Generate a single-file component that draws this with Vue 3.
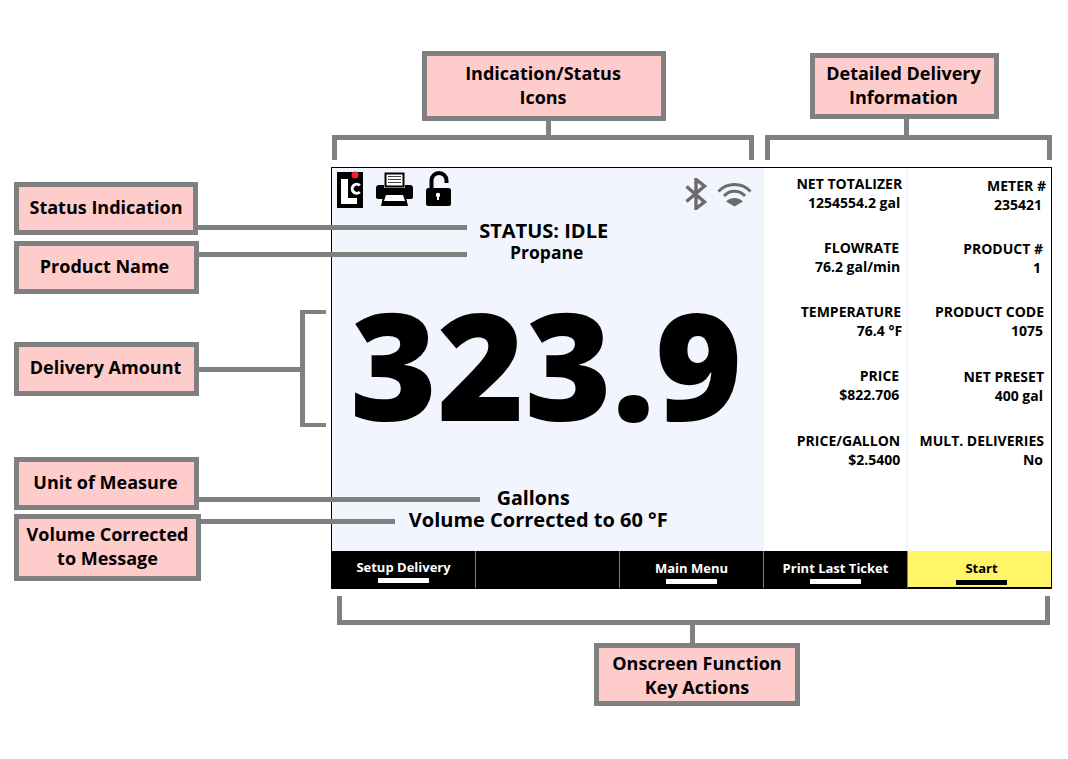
<script setup>
const callouts = [
  { text: ['Indication/Status', 'Icons'], x: 422, y: 51, w: 244, h: 70, up: 3, shift: 2 },
  { text: ['Detailed Delivery', 'Information'], x: 810, y: 53, w: 189, h: 66, up: 3, shift: 2 },
  { text: ['Status Indication'], x: 14, y: 182, w: 184, h: 53, up: 4, shift: 0 },
  { text: ['Product Name'], x: 14, y: 241, w: 185, h: 53, up: 4, shift: 4 },
  { text: ['Delivery Amount'], x: 14, y: 342, w: 185, h: 54, up: 4, shift: 2 },
  { text: ['Unit of Measure'], x: 14, y: 457, w: 185, h: 53, up: 4, shift: 2 },
  { text: ['Volume Corrected', 'to Message'], x: 14, y: 514, w: 187, h: 67, up: 4, shift: 0 },
  { text: ['Onscreen Function', 'Key Actions'], x: 594, y: 643, w: 206, h: 63, up: 0, shift: 0 }
]

// leader lines and brackets: x, y, w, h
const lines = [
  [332, 135, 422, 5], [332, 135, 5, 25], [749, 135, 5, 25], [546, 121, 5, 15],
  [765, 135, 287, 5], [765, 135, 5, 25], [1047, 135, 5, 25], [904, 119, 5, 17],
  [337, 620, 713, 5], [337, 596, 5, 25], [1045, 596, 5, 25], [690, 625, 5, 18],
  [300, 310, 5, 117], [300, 310, 26, 4], [300, 423, 26, 4], [199, 367, 101, 5],
  [198, 225, 269, 5], [199, 252, 268, 5], [199, 497, 281, 5], [201, 519, 194, 5]
]

// lp / vp: right padding of label and value, mt: nudge of the row
const leftInfo = [
  { label: 'NET TOTALIZER', value: '1254554.2 gal', lp: 4, vp: 6, mt: 0 },
  { label: 'FLOWRATE', value: '76.2 gal/min', lp: 7, vp: 6, mt: 0 },
  { label: 'TEMPERATURE', value: '76.4 °F', lp: 5, vp: 4, mt: 0 },
  { label: 'PRICE', value: '$822.706', lp: 7, vp: 7, mt: 0 },
  { label: 'PRICE/GALLON', value: '$2.5400', lp: 6, vp: 6, mt: 1 }
]

const rightInfo = [
  { label: 'METER #', value: '235421', lp: 5, vp: 9, mt: 0 },
  { label: 'PRODUCT #', value: '1', lp: 8, vp: 10, mt: -1 },
  { label: 'PRODUCT CODE', value: '1075', lp: 7, vp: 8, mt: -1 },
  { label: 'NET PRESET', value: '400 gal', lp: 7, vp: 8, mt: 1 },
  { label: 'MULT. DELIVERIES', value: 'No', lp: 7, vp: 8, mt: 0 }
]

const keys = ['Setup Delivery', '', 'Main Menu', 'Print Last Ticket', 'Start']
</script>

<template>
  <div class="canvas">
    <div class="screen">
      <div class="main">
        <div class="left">
          <div class="icons">
            <svg class="logo" width="27" height="37" viewBox="0 0 27 37">
              <rect x="0" y="1" width="26" height="36" fill="#000" />
              <path d="M4 8h7v19h9v6H4z" fill="#fff" />
              <path d="M22.800 14.500a4.500 4.500 0 1 0 0 6.500" fill="none" stroke="#fff" stroke-width="3" />
              <circle cx="18" cy="4" r="3.500" fill="#ee2233" />
            </svg>
            <svg class="printer" width="37" height="34" viewBox="0 0 37 34">
              <path d="M9.500 1.500h18v13h-18z" fill="#fff" stroke="#000" stroke-width="2" />
              <path d="M12 4.500h13M12 7.500h13M12 10.500h13" stroke="#444" stroke-width="1.200" />
              <path d="M3 13h5v3h21v-3h5q3 0 3 3v9q0 2-2 2h-5l-1-4H8l-1 4H2q-2 0-2-2v-9q0-3 3-3z" fill="#000" />
              <path d="M8 21h21l3 13H5z" fill="#000" />
              <path d="M10 23h17l2 6H8z" fill="#fff" />
            </svg>
            <svg class="lock" width="26" height="35" viewBox="0 0 26 35">
              <path d="M5.500 18V9.500a7.500 7.500 0 0 1 15 0V12" fill="none" stroke="#000" stroke-width="4" />
              <rect x="0" y="17" width="25" height="18" rx="2.500" fill="#000" />
              <circle cx="12" cy="24" r="2.200" fill="#fff" />
              <rect x="11" y="24" width="2" height="5" fill="#fff" />
            </svg>
            <div class="spacer"></div>
            <svg class="bt" width="24" height="32" viewBox="0 0 24 32">
              <path d="M2.500 8.500l18 15.500-8.500 6.500V1.500l8.500 6.500-18 15.500" fill="none" stroke="#6b6b6b" stroke-width="3.400" />
            </svg>
            <svg class="wifi" width="35" height="24" viewBox="0 0 35 24">
              <path d="M1.500 8.500A22 22 0 0 1 33.500 8.500" fill="none" stroke="#6b6b6b" stroke-width="3" />
              <path d="M7 13A14 14 0 0 1 28 13" fill="none" stroke="#6b6b6b" stroke-width="3" />
              <path d="M9 18.500A12 12 0 0 1 26 18.500L17.500 23.500z" fill="#6b6b6b" />
            </svg>
          </div>
          <div class="status">STATUS: IDLE</div>
          <div class="product">Propane</div>
          <div class="amount">323.9</div>
          <div class="unit">Gallons</div>
          <div class="corrected">Volume Corrected to 60 °F</div>
        </div>
        <div class="info info-left">
          <div v-for="d in leftInfo" :key="d.label" :style="{ marginTop: d.mt + 'px' }">
            <div :style="{ paddingRight: d.lp + 'px' }">{{ d.label }}</div>
            <div :style="{ paddingRight: d.vp + 'px' }">{{ d.value }}</div>
          </div>
        </div>
        <div class="info info-right">
          <div v-for="d in rightInfo" :key="d.label" :style="{ marginTop: d.mt + 'px' }">
            <div :style="{ paddingRight: d.lp + 'px' }">{{ d.label }}</div>
            <div :style="{ paddingRight: d.vp + 'px' }">{{ d.value }}</div>
          </div>
        </div>
      </div>
      <div class="keys">
        <div v-for="(k, i) in keys" :key="i" class="key" :class="{ start: k === 'Start' }">
          <template v-if="k">
            <span>{{ k }}</span>
            <i></i>
          </template>
        </div>
      </div>
    </div>

    <div
      v-for="(l, i) in lines"
      :key="i"
      class="line"
      :style="{ left: l[0] + 'px', top: l[1] + 'px', width: l[2] + 'px', height: l[3] + 'px' }"
    ></div>

    <div
      v-for="c in callouts"
      :key="c.text[0]"
      class="callout"
      :style="{ left: c.x + 'px', top: c.y + 'px', width: c.w + 'px', height: c.h + 'px', paddingBottom: c.up + 'px', paddingRight: c.shift + 'px' }"
    >
      <span v-for="t in c.text" :key="t">{{ t }}</span>
    </div>
  </div>
</template>

<style scoped>
.canvas {
  position: relative;
  width: 1068px;
  height: 759px;
  background: #fff;
  color: #000;
  overflow: hidden;
  font-family: "Open Sans", "Liberation Sans", sans-serif;
}

.line {
  position: absolute;
  background: #808080;
}

.callout {
  position: absolute;
  box-sizing: border-box;
  display: flex;
  flex-direction: column;
  align-items: center;
  justify-content: center;
  background: #ffcccc;
  border: 5px solid #808080;
  font-size: 18px;
  font-weight: 700;
  line-height: 24px;
  white-space: nowrap;
}

.screen {
  position: absolute;
  left: 331px;
  top: 167px;
  width: 721px;
  height: 422px;
  box-sizing: border-box;
  border: 1px solid #000;
  display: flex;
  flex-direction: column;
}

.main {
  flex: 1;
  display: flex;
  min-height: 0;
}

.left {
  width: 433px;
  background: #f2f5fd;
  display: flex;
  flex-direction: column;
  align-items: center;
}

.icons {
  align-self: stretch;
  display: flex;
  align-items: flex-start;
  padding: 3px 12px 0 5px;
  height: 50px;
  box-sizing: border-box;
}

.printer {
  margin: 1px 0 0 12px;
}

.lock {
  margin-left: 13px;
}

.spacer {
  flex: 1;
}

.bt {
  margin-top: 7px;
}

.wifi {
  margin: 12px 0 0 9px;
}

.status {
  font-size: 20px;
  font-weight: 700;
  line-height: 22px;
  margin-top: 2px;
  padding-right: 9px;
}

.product {
  font-size: 17.500px;
  font-weight: 700;
  line-height: 22px;
  margin-top: -1px;
  padding-right: 3px;
}

.amount {
  font-size: 149px;
  font-weight: 800;
  line-height: 160px;
  margin-top: 21px;
  padding-right: 4px;
}

.unit {
  font-size: 19.700px;
  font-weight: 700;
  line-height: 22px;
  margin-top: 43px;
  padding-right: 30px;
}

.corrected {
  font-size: 20px;
  font-weight: 700;
  line-height: 22px;
  padding-right: 20px;
}

.info {
  width: 144px;
  box-sizing: border-box;
  display: flex;
  flex-direction: column;
  gap: 26px;
  font-size: 14px;
  font-weight: 700;
  line-height: 19px;
  text-align: right;
  background: #fff;
  white-space: nowrap;
}

.info-left {
  padding-top: 6px;
  border-right: 2px solid #f2f5fd;
}

.info-right {
  padding-top: 8px;
  width: 143px;
}

.keys {
  height: 37px;
  display: flex;
  background: #000;
}

.key {
  width: 144px;
  box-sizing: border-box;
  border-right: 1px solid #808080;
  display: flex;
  flex-direction: column;
  align-items: center;
  padding-top: 8px;
  color: #fff;
  font-size: 13px;
  font-weight: 700;
  line-height: 18px;
}

.key:first-child {
  padding-top: 7px;
}

.key i {
  width: 51px;
  height: 5px;
  margin-top: 2px;
  background: #fff;
}

.key.start {
  flex: 1;
  width: auto;
  border-right: 0;
  border-bottom: 1px solid #000;
  padding-left: 4px;
  background: #fff566;
  color: #000;
}

.key.start i {
  margin-top: 3px;
  background: #000;
}
</style>
